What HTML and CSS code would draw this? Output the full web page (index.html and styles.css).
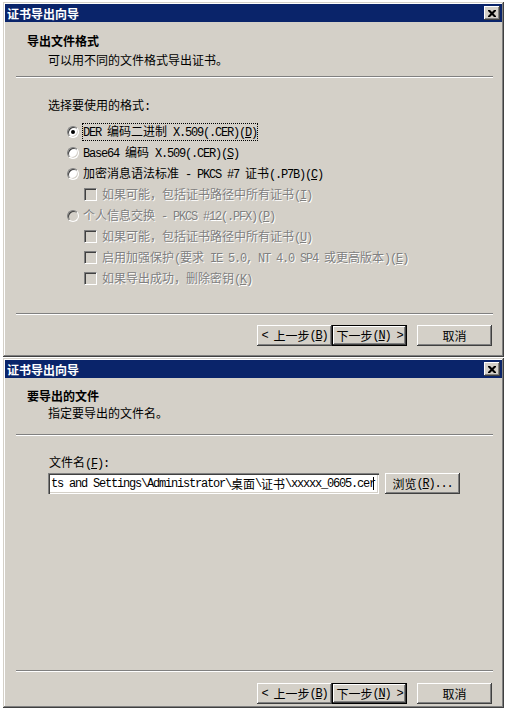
FILE: index.html
```html
<!DOCTYPE html>
<html lang="zh-CN">

<head>
  <meta charset="UTF-8">
  <title>证书导出向导</title>
  <link rel="stylesheet" href="styles.css">
</head>

<body>

  <!-- Step: export file format -->
  <div class="window">
    <div class="titlebar">
      <span class="title">证书导出向导</span>
      <span class="close">
        <svg width="8" height="7" viewBox="0 0 8 7"><path d="M0 0h2l2 2 2-2h2v1L5.5 3.5 8 6v1H6L4 5 2 7H0V6l2.5-2.5L0 1z"/></svg>
      </span>
    </div>
    <div class="head">
      <div class="head-title">导出文件格式</div>
      <div class="head-sub">可以用不同的文件格式导出证书。</div>
    </div>
    <div class="etched"></div>
    <div class="body">
      <div class="prompt">选择要使用的格式<span class="en">:</span></div>
      <div class="opt">
        <span class="radio checked"></span>
        <span class="lbl focus"><span class="en">DER </span>编码二进制<span class="en"> X.509(.CER)(<u>D</u>)</span></span>
      </div>
      <div class="opt">
        <span class="radio"></span>
        <span class="lbl"><span class="en">Base64 </span>编码<span class="en"> X.509(.CER)(<u>S</u>)</span></span>
      </div>
      <div class="opt">
        <span class="radio"></span>
        <span class="lbl">加密消息语法标准<span class="en"> - PKCS #7 </span>证书<span class="en">(.P7B)(<u>C</u>)</span></span>
      </div>
      <div class="opt sub disabled">
        <span class="check"></span>
        <span class="lbl">如果可能，包括证书路径中所有证书<span class="en">(<u>I</u>)</span></span>
      </div>
      <div class="opt disabled">
        <span class="radio"></span>
        <span class="lbl">个人信息交换<span class="en"> - PKCS #12(.PFX)(<u>P</u>)</span></span>
      </div>
      <div class="opt sub disabled">
        <span class="check"></span>
        <span class="lbl">如果可能，包括证书路径中所有证书<span class="en">(<u>U</u>)</span></span>
      </div>
      <div class="opt sub disabled">
        <span class="check"></span>
        <span class="lbl">启用加强保护<span class="en">(</span>要求<span class="en"> IE 5.0, NT 4.0 SP4 </span>或更高版本<span class="en">)(<u>E</u>)</span></span>
      </div>
      <div class="opt sub disabled">
        <span class="check"></span>
        <span class="lbl">如果导出成功，删除密钥<span class="en">(<u>K</u>)</span></span>
      </div>
    </div>
    <div class="etched"></div>
    <div class="foot">
      <button class="btn"><span class="en">&lt; </span>上一步<span class="en">(<u>B</u>)</span></button>
      <button class="btn default">下一步<span class="en">(<u>N</u>) &gt;</span></button>
      <button class="btn cancel">取消</button>
    </div>
  </div>

  <!-- Step: file to export -->
  <div class="window second">
    <div class="titlebar">
      <span class="title">证书导出向导</span>
      <span class="close">
        <svg width="8" height="7" viewBox="0 0 8 7"><path d="M0 0h2l2 2 2-2h2v1L5.5 3.5 8 6v1H6L4 5 2 7H0V6l2.5-2.5L0 1z"/></svg>
      </span>
    </div>
    <div class="head">
      <div class="head-title">要导出的文件</div>
      <div class="head-sub">指定要导出的文件名。</div>
    </div>
    <div class="etched"></div>
    <div class="body">
      <div class="field-label">文件名<span class="en">(<u>F</u>):</span></div>
      <div class="field">
        <div class="input"><span class="en">ts and Settings\Administrator\</span>桌面<span class="en">\</span>证书<span class="en">\xxxxx_0605.cer</span><span class="caret"></span></div>
        <button class="btn">浏览<span class="en">(<u>R</u>)...</span></button>
      </div>
    </div>
    <div class="etched"></div>
    <div class="foot">
      <button class="btn"><span class="en">&lt; </span>上一步<span class="en">(<u>B</u>)</span></button>
      <button class="btn default">下一步<span class="en">(<u>N</u>) &gt;</span></button>
      <button class="btn cancel">取消</button>
    </div>
  </div>

</body>

</html>
```

FILE: styles.css
```css
body {
  margin: 0;
  padding: 2px 3px;
  background: #fff;
  color: #000;
  font-family: "Noto Sans CJK SC", sans-serif;
  font-size: 12px;
}

.en {
  font-family: "Liberation Mono", monospace;
  letter-spacing: -1.2px;
  white-space: pre;
}

.window {
  width: 501px;
  box-sizing: border-box;
  padding: 2px;
  background: #d4d0c8;
  box-shadow: inset -1px -1px #404040, inset 1px 1px #d4d0c8, inset -2px -2px #808080, inset 2px 2px #fff;
}

.window + .window {
  margin-top: 1px;
}

.titlebar {
  height: 18px;
  padding: 0 2px 0 2px;
  display: flex;
  align-items: center;
  justify-content: space-between;
  background: #0a246a;
  color: #fff;
  font-weight: bold;
}

.close {
  width: 16px;
  height: 14px;
  box-sizing: border-box;
  display: flex;
  align-items: center;
  justify-content: center;
  background: #d4d0c8;
  box-shadow: inset -1px -1px #404040, inset 1px 1px #fff, inset -2px -2px #808080;
}

.head {
  padding: 12px 0 9px 22px;
}

.head-title {
  font-weight: bold;
  line-height: 14px;
}

.head-sub {
  margin: 5px 0 0 21px;
  line-height: 14px;
}

.second .head {
  padding: 11px 0 14px 22px;
}

.second .head-sub {
  margin-top: 3px;
}

.etched {
  margin: 0 9px 0 11px;
  border-top: 1px solid #808080;
  border-bottom: 1px solid #fff;
}

.body {
  height: 235px;
  box-sizing: border-box;
  padding: 20px 0 0 43px;
}

.second .body {
  height: 234px;
  padding-top: 19px;
}

.prompt {
  line-height: 14px;
  margin-bottom: 7px;
}

.opt {
  height: 21px;
  margin-left: 19px;
  display: flex;
  align-items: center;
}

.opt.sub {
  margin-left: 36px;
}

.lbl {
  border: 1px solid transparent;
  line-height: 13px;
}

.lbl.focus {
  border: 1px dotted #000;
}

.disabled .lbl {
  color: #808080;
  text-shadow: 1px 1px 0 #fff;
}

.radio {
  position: relative;
  width: 12px;
  height: 12px;
  margin-right: 3px;
  box-sizing: border-box;
  border: 1px solid;
  border-color: #808080 #fff #fff #808080;
  border-radius: 50%;
  background: #fff;
  box-shadow: inset 1px 1px #404040, inset -1px -1px #d4d0c8;
}

.radio.checked::after {
  content: "";
  position: absolute;
  left: 3px;
  top: 3px;
  width: 4px;
  height: 4px;
  border-radius: 50%;
  background: #000;
}

.check {
  width: 13px;
  height: 13px;
  margin-right: 4px;
  box-sizing: border-box;
  border: 1px solid;
  border-color: #808080 #fff #fff #808080;
  background: #fff;
  box-shadow: inset 1px 1px #404040, inset -1px -1px #d4d0c8;
}

.disabled .radio,
.disabled .check {
  background: #d4d0c8;
}

.field-label {
  line-height: 14px;
  margin-left: 1px;
}

.field {
  margin-top: 2px;
  display: flex;
  gap: 6px;
}

.input {
  width: 331px;
  height: 21px;
  box-sizing: border-box;
  padding: 0 3px;
  display: flex;
  align-items: center;
  overflow: hidden;
  white-space: nowrap;
  background: #fff;
  box-shadow: inset 1px 1px #808080, inset 2px 2px #404040, inset -1px -1px #fff, inset -2px -2px #d4d0c8;
}

.caret {
  width: 1px;
  height: 13px;
  margin-left: -2px;
  background: #000;
}

.foot {
  padding: 10px 10px 9px 0;
  display: flex;
  justify-content: flex-end;
}

.second .foot {
  padding: 11px 10px 2px 0;
}

.btn {
  width: 75px;
  height: 21px;
  box-sizing: border-box;
  padding: 0;
  border: none;
  display: flex;
  align-items: center;
  justify-content: center;
  background: #d4d0c8;
  color: #000;
  font: inherit;
  box-shadow: inset -1px -1px #404040, inset 1px 1px #fff, inset -2px -2px #808080;
}

.btn.default {
  border: 1px solid #000;
}

.btn.cancel {
  margin-left: 10px;
}
```
